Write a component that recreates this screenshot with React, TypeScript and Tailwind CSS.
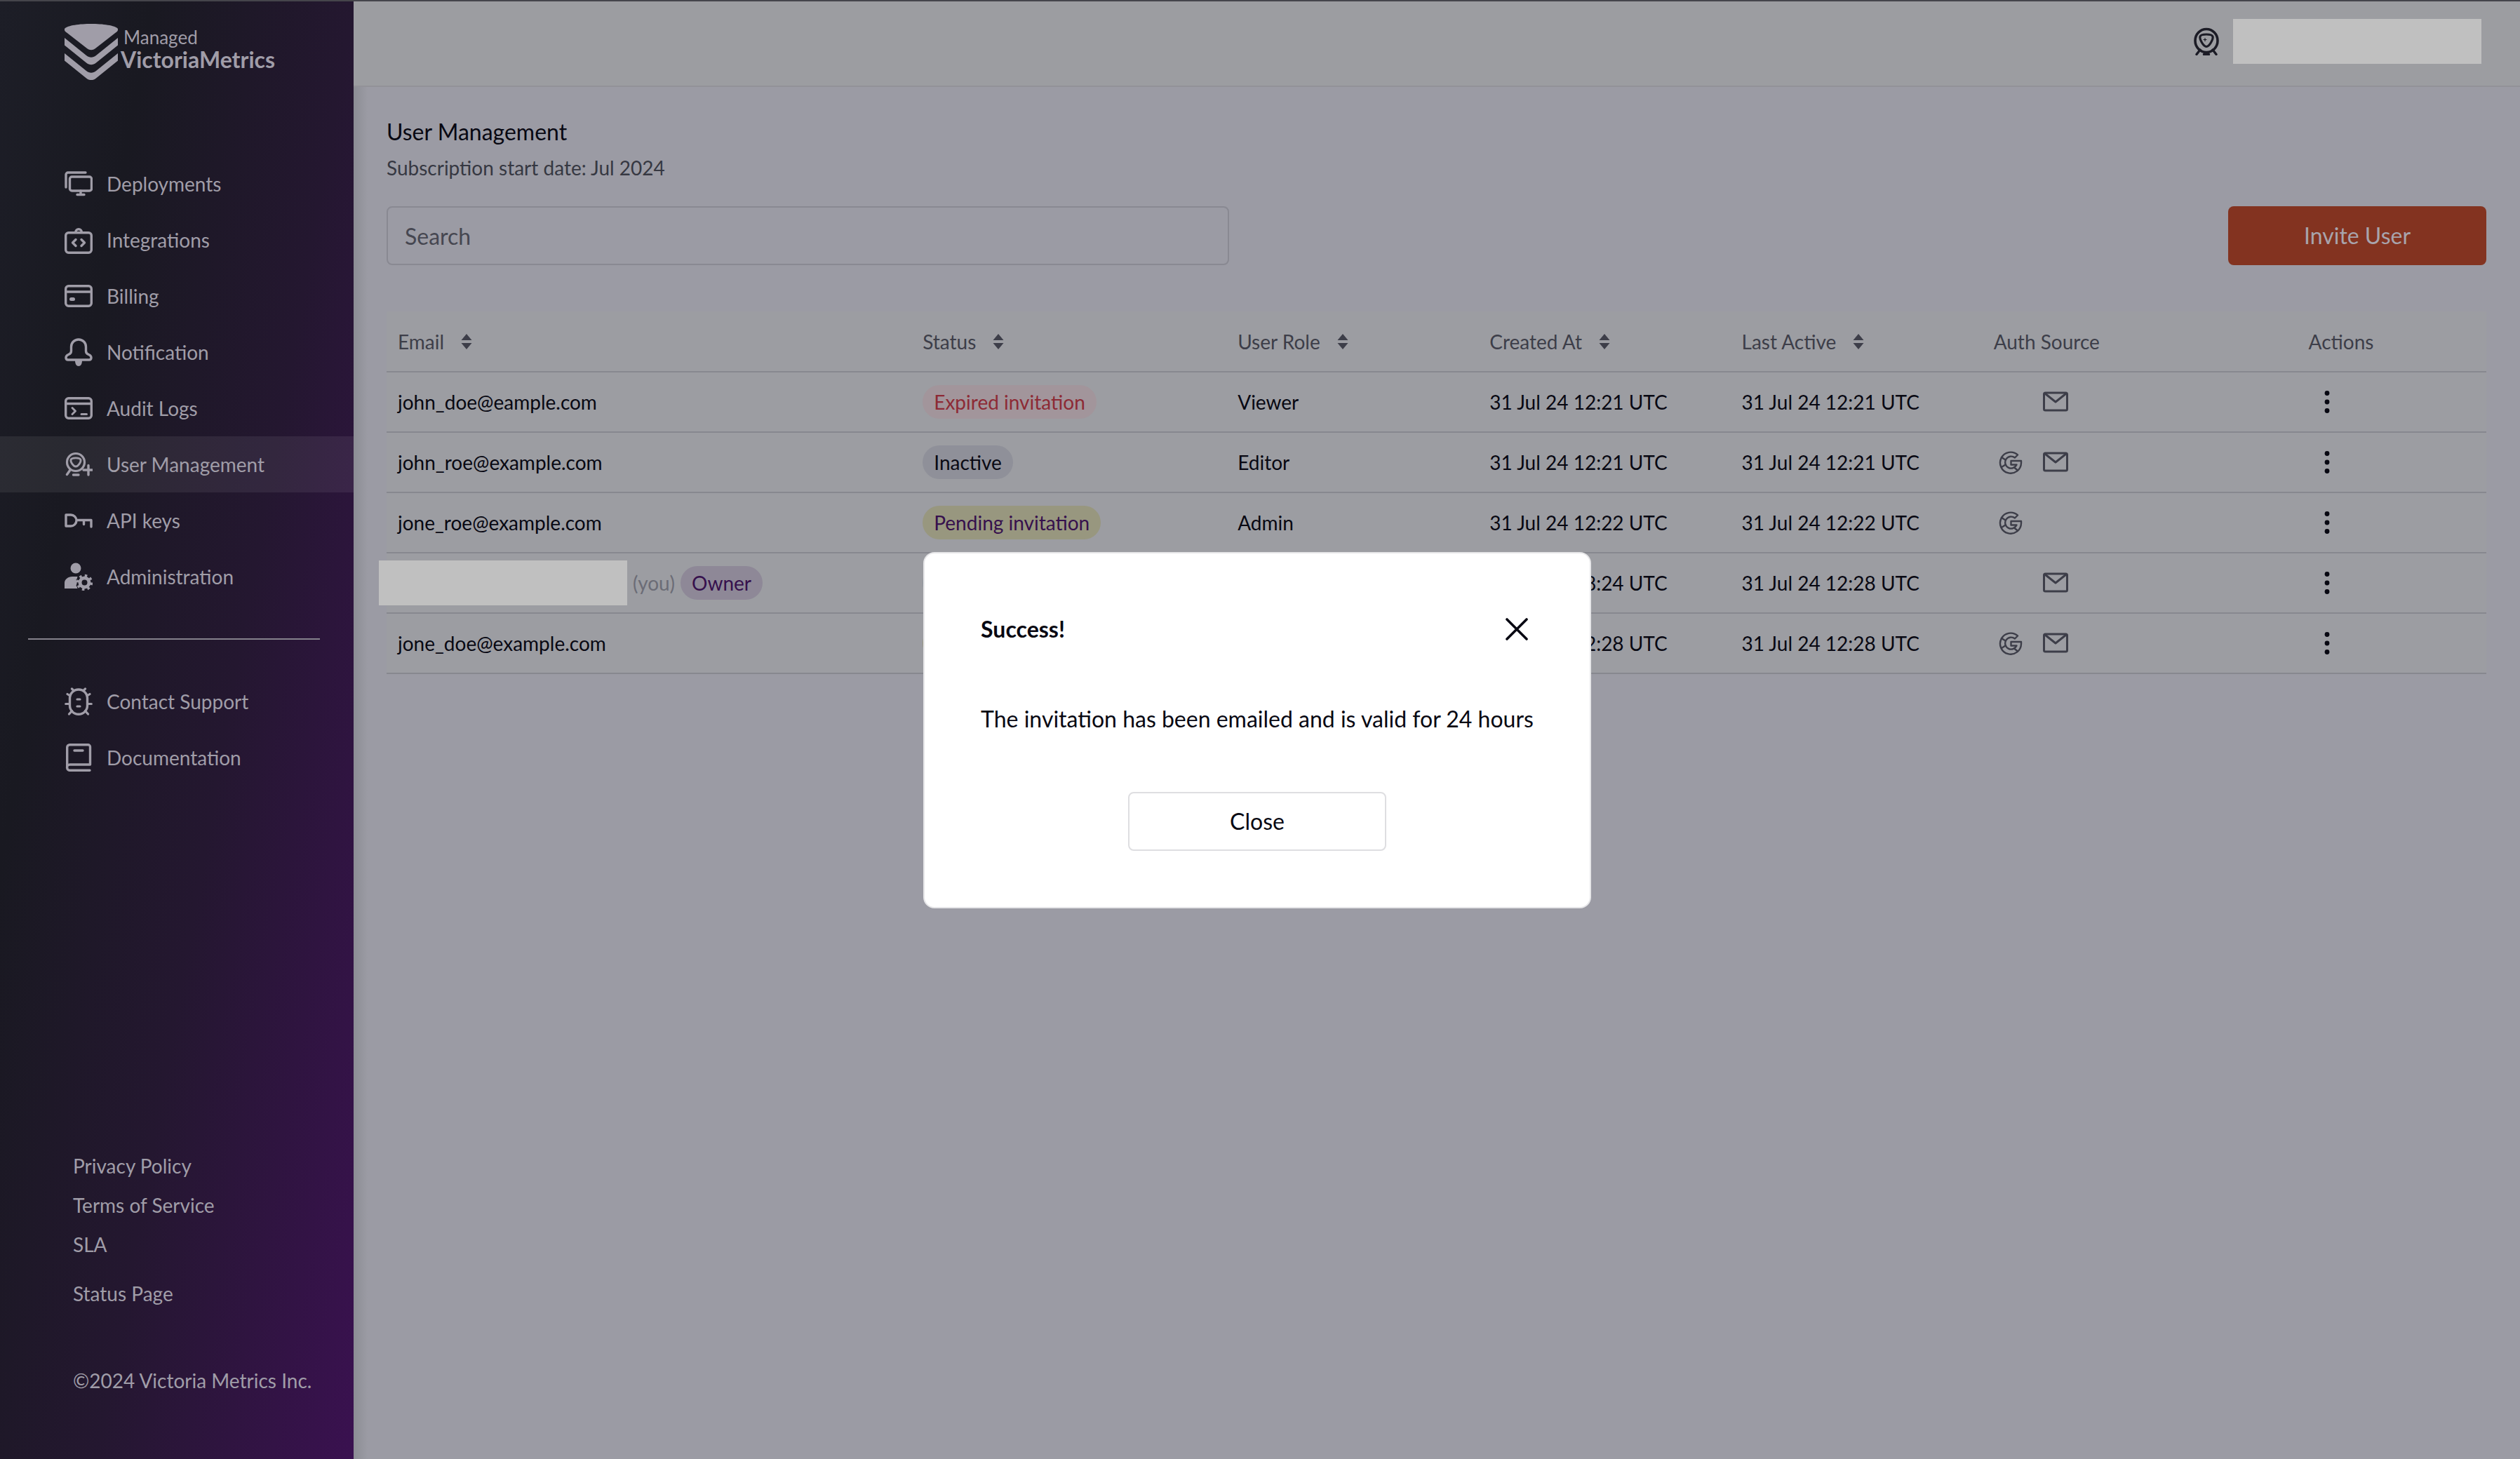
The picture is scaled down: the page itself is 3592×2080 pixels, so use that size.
import type { ReactNode } from "react";

const Svg = ({ size = 40, box = "0 0 40 40", children }: { size?: number; box?: string; children: ReactNode }) => (
  <svg width={size} height={size} viewBox={box} fill="none" stroke="currentColor" strokeWidth={3.4} strokeLinecap="round" strokeLinejoin="round" aria-hidden="true" className="shrink-0">
    {children}
  </svg>
);

const DeployIcon = () => (
  <Svg>
    <rect x="7.5" y="10" width="31" height="20" rx="3" />
    <path d="M2 25V7a3 3 0 0 1 3-3h25M23 30v4M18 35.5h10" />
  </Svg>
);
const IntegrationsIcon = () => (
  <Svg>
    <rect x="1.7" y="9.7" width="36.6" height="28.6" rx="4" />
    <path d="M15.8 9a4.3 4.3 0 1 1 8.6 0M16 19.5l-4.5 4.5 4.500 4.500M24 19.500l4.500 4.500-4.500 4.500" />
  </Svg>
);
const BillingIcon = () => (
  <Svg>
    <rect x="1.700" y="5.700" width="36.600" height="28.600" rx="4" />
    <path d="M2 14h36" />
    <path d="M9.500 24.500h3" strokeWidth={5} />
  </Svg>
);
const BellIcon = () => (
  <Svg>
    <path d="M20 2c-6 0-10.500 4.500-10.500 10.500v6c0 3-1.500 4-4 5C3 24.500 2 26 2 28s1 3 3 3h30c2 0 3-1 3-3s-1-3.500-3.500-4.500c-2.500-1-4-2-4-5v-6C30.500 6.500 26 2 20 2z" />
    <path d="M15 32h10c0 5-2 8-5 8s-5-3-5-8z" fill="currentColor" stroke="none" />
  </Svg>
);
const LogsIcon = () => (
  <Svg>
    <rect x="1.700" y="5.700" width="36.600" height="28.600" rx="4" />
    <path d="M2 13.500h36" />
    <path d="M11 19.500l4.500 4.500-4.500 4.500M24 28.500h7.500" strokeWidth={3} />
  </Svg>
);
const UserPlusIcon = () => (
  <Svg>
    <circle cx="16" cy="17" r="12.500" strokeWidth={3.200} />
    <path d="M9 13.500c1-3.500 13-3.500 14 0 .700 3-3.500 9.500-7 9.500s-7.700-6.500-7-9.500z" strokeWidth={2.800} />
    <path d="M8 28l-4.500 6.500M12.500 35h7.500M27 28h13.500M34 21.500v13.500" />
  </Svg>
);
const KeyIcon = () => (
  <Svg>
    <path d="M2 12h7a8 8 0 0 1 0 16H2zM17.500 19.500H38V29M27.500 20v5.500" />
  </Svg>
);
const AdminIcon = () => (
  <Svg>
    <g fill="currentColor" stroke="none">
      <circle cx="16" cy="8" r="7.500" />
      <path d="M0 37v-8c0-5 5-9 11-9h7.500c-.5 2-.5 3-2 4.500 1.500 2 1.500 6 0 8 1 1.500 1.500 3 2 4.500z" />
    </g>
    <circle cx="28.500" cy="28.500" r="6.500" strokeWidth={5} />
    <circle cx="28.500" cy="28.500" r="9.800" strokeWidth={3.800} strokeDasharray="3.400 4.297" strokeLinecap="butt" />
  </Svg>
);
const BugIcon = () => (
  <Svg>
    <rect x="7.500" y="3" width="25" height="35.300" rx="12.500" />
    <path d="M18 17h4M18 27h4M13 4.500L10.500 2M27 4.500L29.500 2M8 12L4 9.500M32 12l4-2.500M7 23.500H1.700M33 23.500h5.300M10.500 33.500L6.500 38M29.500 33.500l4 4.500" strokeWidth={3.200} />
  </Svg>
);
const BookIcon = () => (
  <Svg>
    <path d="M36 38.300H7a3.500 3.500 0 0 1-3.300-3.500V5.500a3.800 3.800 0 0 1 3.800-3.800h26a3 3 0 0 1 3 3V30H7.500a4 4 0 0 0-4 4M14 10h12" />
  </Svg>
);
const ProfileIcon = () => (
  <Svg>
    <ellipse cx="20" cy="19" rx="16" ry="16.500" strokeWidth={3.600} />
    <path d="M11 13c1.500-4 16.500-4 18 0 1 3.500-4.500 14.500-9 14.500S10 16.500 11 13z" strokeWidth={3.200} />
    <path d="M11 32l-5 6.500M29 32l5 6.500M16.500 38.500h7" />
    <path d="M18 15.500v4M16 17.500h4" strokeWidth={1.200} />
  </Svg>
);
const GoogleIcon = () => (
  <Svg size={34} box="0 0 34 34">
    <g strokeWidth={2.400}>
      <path d="M27 6.500A15 15 0 1 0 32 18v-3H17.500v5.500h8a8.500 8.500 0 1 1-2.500-10z" />
      <path d="M4 10l5.500 3.500M4 24l5.500-3.500M22 24.500l5 4" />
    </g>
  </Svg>
);
const MailIcon = () => (
  <Svg size={36} box="0 0 36 36">
    <rect x="1.500" y="5" width="33" height="25" rx="2" strokeWidth={3} />
    <path d="M3 6l15 12L33 6" strokeWidth={3} />
  </Svg>
);
const SortIcon = () => (
  <svg width="16" height="22" viewBox="0 0 16 22" fill="currentColor" aria-hidden="true">
    <path d="M8 0l7.500 9H.5zM8 22l7.500-9H.5z" />
  </svg>
);

const primaryNav = [
  { label: "Deployments", icon: <DeployIcon /> },
  { label: "Integrations", icon: <IntegrationsIcon /> },
  { label: "Billing", icon: <BillingIcon /> },
  { label: "Notification", icon: <BellIcon /> },
  { label: "Audit Logs", icon: <LogsIcon /> },
  { label: "User Management", icon: <UserPlusIcon />, active: true },
  { label: "API keys", icon: <KeyIcon /> },
  { label: "Administration", icon: <AdminIcon /> },
];
const secondaryNav = [
  { label: "Contact Support", icon: <BugIcon /> },
  { label: "Documentation", icon: <BookIcon /> },
];

const NavItem = ({ label, icon, active }: { label: string; icon: ReactNode; active?: boolean }) => (
  <a href="#" aria-current={active ? "page" : undefined} className={`flex h-20 items-center gap-5 pl-[92px] ${active ? "bg-white/7" : ""}`}>
    {icon}
    <span>{label}</span>
  </a>
);

const columns = [
  { label: "Email", width: "w-[25%]", sort: true },
  { label: "Status", width: "w-[15%]", sort: true },
  { label: "User Role", width: "w-[12%]", sort: true },
  { label: "Created At", width: "w-[12%]", sort: true },
  { label: "Last Active", width: "w-[12%]", sort: true },
  { label: "Auth Source", width: "w-[15%]" },
  { label: "Actions", width: "w-[9%]" },
];

const chipStyles = {
  expired: "bg-[#a2959b] text-[#8d2a35]",
  inactive: "bg-[#8f9099] text-[#0a0a14]",
  pending: "bg-[#98977f] text-[#36104d]",
  active: "bg-[#8f959d] text-[#0a0a14]",
  owner: "bg-[#8e8897] text-[#36104d]",
};
const Chip = ({ kind, children }: { kind: keyof typeof chipStyles; children: ReactNode }) => (
  <span className={`inline-flex h-12 items-center rounded-full px-4 ${chipStyles[kind]}`}>{children}</span>
);

type Row = { email: string; you?: boolean; status: string; kind: keyof typeof chipStyles; role: string; created: string; last: string; google: boolean; mail: boolean };
const rows: Row[] = [
  { email: "john_doe@eample.com", status: "Expired invitation", kind: "expired", role: "Viewer", created: "31 Jul 24 12:21 UTC", last: "31 Jul 24 12:21 UTC", google: false, mail: true },
  { email: "john_roe@example.com", status: "Inactive", kind: "inactive", role: "Editor", created: "31 Jul 24 12:21 UTC", last: "31 Jul 24 12:21 UTC", google: true, mail: true },
  { email: "jone_roe@example.com", status: "Pending invitation", kind: "pending", role: "Admin", created: "31 Jul 24 12:22 UTC", last: "31 Jul 24 12:22 UTC", google: true, mail: false },
  { email: "", you: true, status: "Active", kind: "active", role: "Admin", created: "31 Jul 24 08:24 UTC", last: "31 Jul 24 12:28 UTC", google: false, mail: true },
  { email: "jone_doe@example.com", status: "Pending invitation", kind: "pending", role: "Editor", created: "31 Jul 24 12:28 UTC", last: "31 Jul 24 12:28 UTC", google: true, mail: true },
];

const Sidebar = () => (
  <aside className="flex w-[504px] shrink-0 flex-col bg-[linear-gradient(100deg,#1d1e27_0%,#191921_25%,#241730_58%,#3a1150_100%)] text-[28px] leading-[34px] text-[#a09da8]">
    <a href="#" className="flex h-[120px] items-start pt-8 pl-[92px]">
      <svg width="76" height="80" viewBox="0 0 76 80" fill="currentColor" aria-hidden="true">
        <path d="M0 7C4 2 22 0 38 0s34 2 38 7c.3 1.500 0 3-1.500 4.200L44 35c-4 3-8 3-12 0L1.500 11.200C0 10-.3 8.500 0 7z" />
        <path d="M0 20l31 25c4.500 3.500 9.500 3.500 14 0l31-25v10.500L45 55.500c-4.500 3.500-9.500 3.500-14 0L0 30.500z" />
        <path d="M0 42l31 25c4.500 3.500 9.500 3.500 14 0l31-25v10.500L45 77.500c-4.500 3.500-9.500 3.500-14 0L0 52.500z" />
      </svg>
      <span className="flex flex-col pt-1">
        <span className="pl-2 text-[26px] leading-[30px]">Managed</span>
        <span className="pl-1 text-[32px] leading-[34px] font-bold">VictoriaMetrics</span>
      </span>
    </a>
    <nav aria-label="Main" className="mt-[100px]">
      {primaryNav.map((item) => <NavItem key={item.label} {...item} />)}
    </nav>
    <hr className="mt-12 mr-12 ml-10 border-t-2 border-[#85828c]" />
    <nav aria-label="Help" className="mt-12">
      {secondaryNav.map((item) => <NavItem key={item.label} {...item} />)}
    </nav>
    <div className="mt-auto flex flex-col pb-[84px] pl-[104px] leading-[56px]">
      <a href="#">Privacy Policy</a>
      <a href="#">Terms of Service</a>
      <a href="#">SLA</a>
      <a href="#" className="mt-[14px]">Status Page</a>
      <p className="mt-[68px]">©2024 Victoria Metrics Inc.</p>
    </div>
  </aside>
);

const UserTable = () => (
  <table className="mt-[66px] w-full table-fixed border-collapse bg-[#9c9da2] text-left text-[28px] leading-[34px] text-[#080812]">
    <thead className="text-[#3d3e49]">
      <tr className="h-[86px] border-b-2 border-[#87888f]">
        {columns.map((c) => (
          <th key={c.label} scope="col" className={`px-4 font-normal ${c.width}`}>
            {c.sort ? (
              <button type="button" className="flex items-center gap-6">{c.label}<SortIcon /></button>
            ) : c.label}
          </th>
        ))}
      </tr>
    </thead>
    <tbody>
      {rows.map((r, i) => (
        <tr key={i} className="h-[86px] border-b-2 border-[#87888f]">
          <td className="px-4">
            {r.you ? (
              <div className="-ml-[27px] flex items-center gap-2">
                <span className="h-16 w-[354px] bg-[#c0c0c0]" />
                <span className="text-[#6b6c76]">(you)</span>
                <Chip kind="owner">Owner</Chip>
              </div>
            ) : r.email}
          </td>
          <td className="px-4"><Chip kind={r.kind}>{r.status}</Chip></td>
          <td className="px-4">{r.role}</td>
          <td className="px-4">{r.created}</td>
          <td className="px-4">{r.last}</td>
          <td className="px-4">
            <div className="grid grid-cols-[48px_48px] items-center gap-4 text-[#3d3e49]">
              <span className="flex justify-center">{r.google && <GoogleIcon />}</span>
              <span className="flex justify-center">{r.mail && <MailIcon />}</span>
            </div>
          </td>
          <td className="px-4">
            <button type="button" aria-label="Actions" className="flex h-12 w-[52px] items-center justify-center">
              <svg width="8" height="32" viewBox="0 0 8 32" fill="currentColor" aria-hidden="true">
                <circle cx="4" cy="3.500" r="3.400" /><circle cx="4" cy="16" r="3.400" /><circle cx="4" cy="28.500" r="3.400" />
              </svg>
            </button>
          </td>
        </tr>
      ))}
    </tbody>
  </table>
);

export default function App() {
  return (
    <div className="relative flex min-h-screen border-t-2 border-[#45454b] bg-[#9b9ba4] font-[Lato,sans-serif]">
      <Sidebar />
      <div className="flex min-w-0 flex-1 flex-col">
        <header className="flex h-[122px] items-center justify-end gap-[18px] border-b-2 border-[#929298] bg-[#9c9da1] pr-[55px] pb-[6px] text-[#1c1c26]">
          <button type="button" aria-label="Account"><ProfileIcon /></button>
          <span className="h-16 w-[354px] bg-[#c0c0c0]" />
        </header>
        <main className="flex-1 bg-[linear-gradient(90deg,#8c8d94,#9b9ba4_20px)] pt-[42px] pr-12 pl-[47px]">
          <h1 className="text-[32px] leading-[44px] text-[#080812]">User Management</h1>
          <p className="mt-3 text-[28px] leading-[34px] text-[#363842]">Subscription start date: Jul 2024</p>
          <div className="mt-[38px] flex items-center justify-between">
            <input type="search" aria-label="Search" placeholder="Search" className="h-21 w-[1201px] rounded-lg border-2 border-[#898992] px-6 text-[32px] text-[#080812] placeholder:text-[#464751]" />
            <button type="button" className="h-21 w-[368px] rounded-lg bg-[#833320] text-[32px] text-[#a8a4ac]">Invite User</button>
          </div>
          <UserTable />
        </main>
      </div>
      <div className="absolute inset-0 flex items-center justify-center pr-2">
        <section role="dialog" aria-modal="true" aria-labelledby="dialog-title" className="flex flex-col items-center rounded-2xl border-2 border-[#e6e6e8] bg-white p-20 text-[32px] leading-[40px] text-[#080812]">
          <div className="flex h-14 w-full items-center justify-between">
            <h2 id="dialog-title" className="font-bold">Success!</h2>
            <button type="button" aria-label="Close dialog" className="p-2">
              <svg width="32" height="32" viewBox="0 0 32 32" stroke="currentColor" strokeWidth="3.600" strokeLinecap="round" aria-hidden="true">
                <path d="M2 2l28 28M30 2L2 30" />
              </svg>
            </button>
          </div>
          <p className="mt-20">The invitation has been emailed and is valid for 24 hours</p>
          <button type="button" className="mt-21 h-21 w-[368px] rounded-lg border-2 border-[#dedee1]">Close</button>
        </section>
      </div>
    </div>
  );
}
